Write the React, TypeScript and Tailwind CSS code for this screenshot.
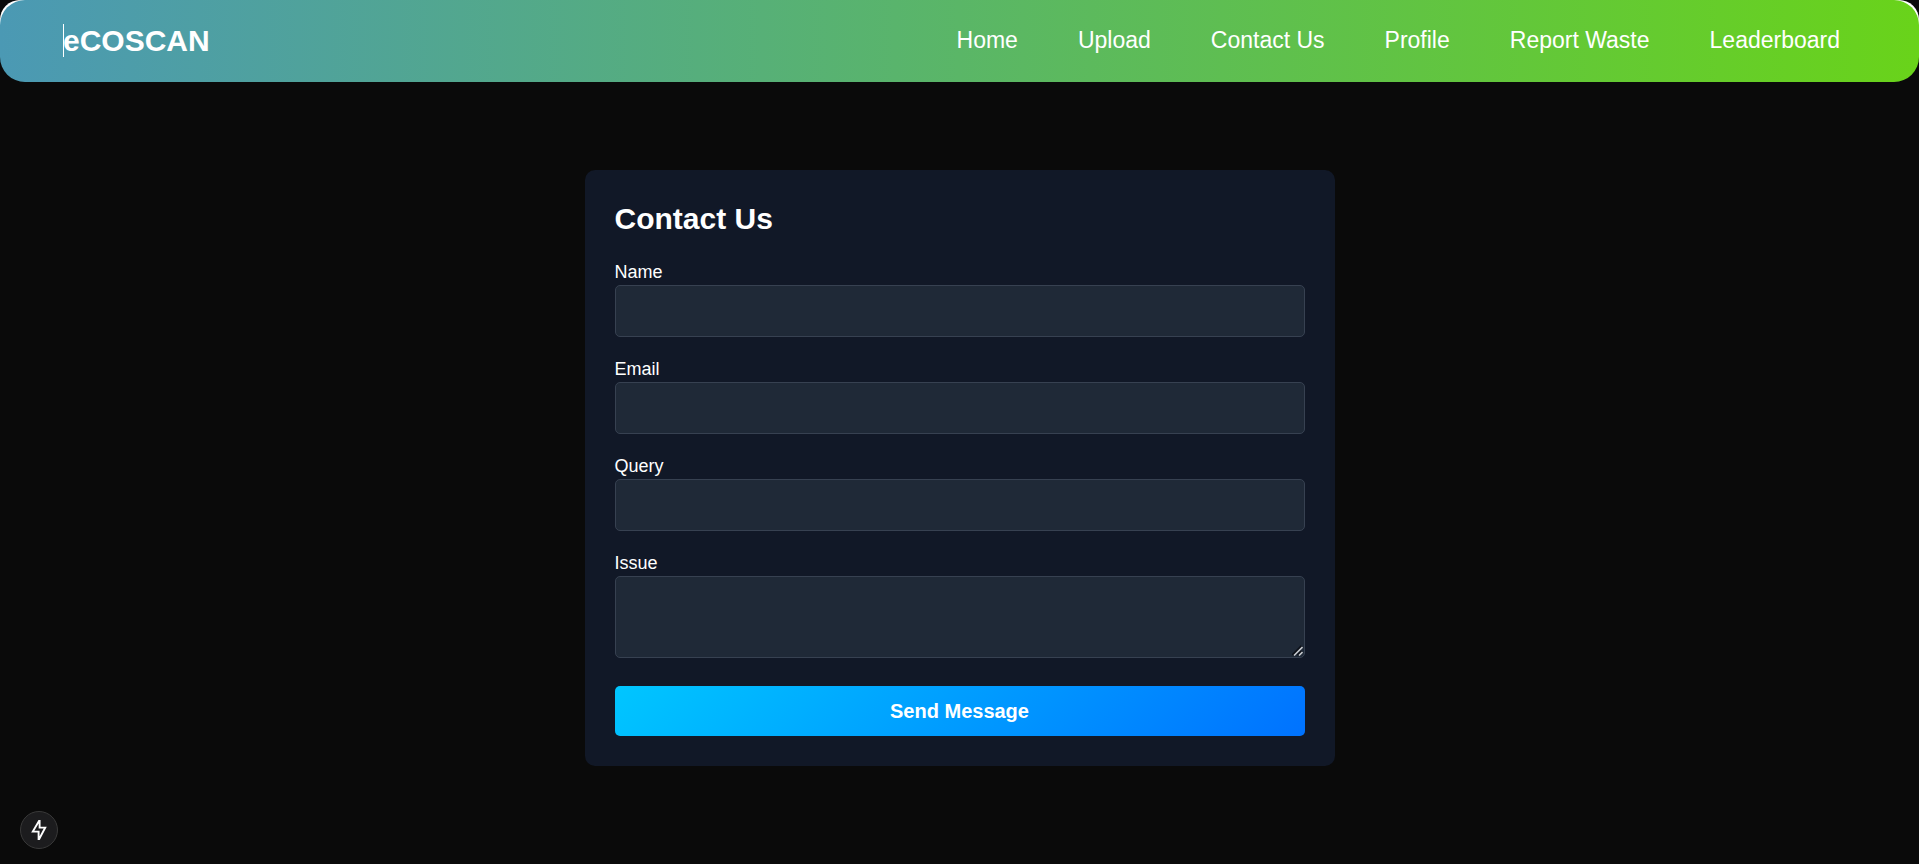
import React from "react";

const links = ["Home", "Upload", "Contact Us", "Profile", "Report Waste", "Leaderboard"];

const fields = [
  { id: "name", label: "Name", type: "text" },
  { id: "email", label: "Email", type: "email" },
  { id: "query", label: "Query", type: "text" },
];

function Header() {
  return (
    <div className="rounded-t-[20px] rounded-b-[40px] bg-white">
      <header className="flex h-[82px] items-center justify-between rounded-[25px] bg-linear-to-r/srgb from-[#4b99b4] to-[#69d31a] pl-[63px] pr-[79px] pb-0.5">
        <a href="#" className="relative text-[30px] leading-[33px] font-bold">
          <span className="absolute inset-y-0 left-0 w-px bg-white" />
          eCOSCAN
        </a>
        <nav className="flex gap-[60px] text-[23px] leading-8">
          {links.map((link) => (
            <a key={link} href="#" className="whitespace-nowrap">
              {link}
            </a>
          ))}
        </nav>
      </header>
    </div>
  );
}

function ContactForm() {
  const control =
    "block w-full rounded-[5px] border border-[#374151] bg-[#1f2937] px-3 text-lg text-white outline-none";
  return (
    <form
      className="w-full max-w-[750px] rounded-[10px] bg-[#111827] p-[30px]"
      onSubmit={(e) => e.preventDefault()}
    >
      <h2 className="mb-[22px] text-[30px] leading-[38px] font-bold">Contact Us</h2>
      {fields.map((f) => (
        <div key={f.id} className="mb-5">
          <label htmlFor={f.id} className="block text-lg leading-[25px]">
            {f.label}
          </label>
          <input id={f.id} type={f.type} className={`${control} h-[52px]`} />
        </div>
      ))}
      <div className="mb-7">
        <label htmlFor="issue" className="block text-lg leading-[25px]">
          Issue
        </label>
        <div className="relative">
          <textarea id="issue" className={`${control} h-[82px] resize-y`} />
          <svg
            className="pointer-events-none absolute right-0.5 bottom-0.5"
            width="11"
            height="11"
            viewBox="0 0 11 11"
            fill="none"
          >
            <rect width="11" height="11" fill="#1f2937" />
            <path d="M0.5 10 L9.5 1 M5.5 10 L9.5 6" stroke="#0b0f17" strokeWidth="2" />
            <path d="M2 10.5 L10.5 2 M7 10.5 L10.5 7" stroke="#c4c7cc" strokeWidth="1.6" />
          </svg>
        </div>
      </div>
      <button
        type="submit"
        className="block h-[50px] w-full rounded-[5px] bg-[linear-gradient(135deg,#00c6ff,#0072ff)] text-xl font-bold"
      >
        Send Message
      </button>
    </form>
  );
}

export default function App() {
  return (
    <div className="min-h-screen bg-[#0a0a0a] font-['Liberation_Sans',Arial,sans-serif] text-white">
      <Header />
      <main className="flex justify-center px-4 pt-[88px] pb-[98px]">
        <ContactForm />
      </main>
      <button
        type="button"
        aria-label="Open developer tools"
        className="fixed bottom-[15px] left-5 flex size-[38px] items-center justify-center rounded-full border border-[#3a3a3a] bg-[#1c1c1e]"
      >
        <svg width="16" height="22" viewBox="0 0 16 22" fill="none" stroke="#fff" strokeWidth="1.9">
          <path d="M8 2 L1.8 12.6 H7.6 V20 H8.2 L14.2 8.6 H8.6 V2 Z" />
        </svg>
      </button>
    </div>
  );
}
